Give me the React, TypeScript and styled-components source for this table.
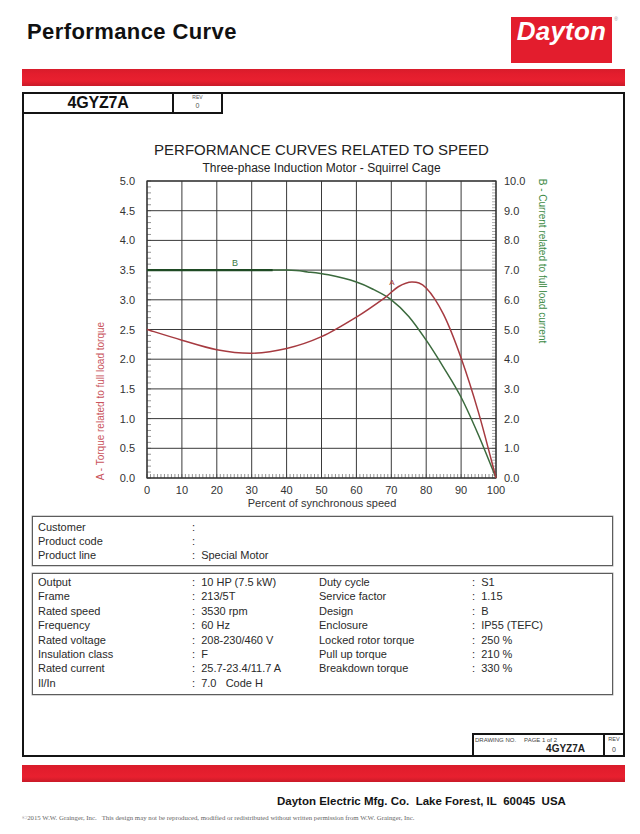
import React from 'react';
import styled, { createGlobalStyle } from 'styled-components';

const GlobalStyle = createGlobalStyle`
	body {
		margin: 0;
		background: #ffffff;
		font-family: "Liberation Sans", Arial, sans-serif;
		color: #111;
	}
`;

const RED = '#e31d2d';

const Page = styled.div`
	width: 640px;
	height: 834px;
	overflow: hidden;
	background: #fff;
`;

const Header = styled.header`
	display: flex;
	justify-content: space-between;
	align-items: flex-start;
	height: 69px;
	padding: 17px 28px 0 27px;
	box-sizing: border-box;
`;

const PageTitle = styled.h1`
	margin: 3px 0 0;
	font-size: 22px;
	font-weight: bold;
	letter-spacing: 0.4px;
	line-height: 24px;
	color: #111;
`;

const Logo = styled.div`
	position: relative;
	width: 101px;
	height: 46px;
	background: ${RED};
	box-sizing: border-box;
	padding-top: 1px;
	text-align: center;
`;

const LogoWord = styled.span`
	color: #fff;
	font-size: 26px;
	font-weight: bold;
	font-style: italic;
	letter-spacing: 0.2px;
	line-height: 27px;
`;

const Registered = styled.span`
	position: absolute;
	top: -1px;
	right: -6px;
	font-size: 5px;
	color: #999;
`;

const RedBar = styled.div<{ $top: number }>`
	margin: ${({ $top }) => $top}px 0 0 22px;
	width: 603px;
	height: 17px;
	background: linear-gradient(180deg, #d81c2b 0%, ${RED} 30%, #e8202f 70%, #c91a28 100%);
`;

const Sheet = styled.section`
	margin: 6px 0 0 22px;
	width: 603px;
	height: 665px;
	border: 2px solid #141414;
	box-sizing: border-box;
	display: flex;
	flex-direction: column;
`;

const TopRow = styled.div`
	display: flex;
	height: 20px;
`;

const ModelCell = styled.div`
	width: 150px;
	box-sizing: border-box;
	border-right: 2px solid #141414;
	border-bottom: 2px solid #141414;
	font-size: 16px;
	font-weight: bold;
	line-height: 18px;
	text-align: center;
	letter-spacing: -0.2px;
`;

const RevCell = styled.div`
	width: 49px;
	box-sizing: border-box;
	border-right: 2px solid #141414;
	border-bottom: 2px solid #141414;
	display: flex;
	flex-direction: column;
	align-items: center;
	color: #555;
`;

const Tiny = styled.span<{ $size: number }>`
	font-size: ${({ $size }) => $size}px;
	line-height: ${({ $size }) => $size + 2}px;
`;

const ChartTitle = styled.h2`
	margin: 27px 0 0;
	font-size: 15px;
	font-weight: normal;
	line-height: 18px;
	text-align: center;
	color: #222;
	padding-right: 4px;
`;

const ChartSubtitle = styled.div`
	margin-top: 2px;
	font-size: 12px;
	line-height: 14px;
	text-align: center;
	color: #222;
	padding-right: 4px;
`;

const ChartSvg = styled.svg`
	display: block;
	width: 599px;
	height: 337px;
	font-family: "Liberation Sans", Arial, sans-serif;
`;

const InfoBox = styled.div<{ $top: number; $pad: string }>`
	margin: ${({ $top }) => $top}px 10px 0 8px;
	border: 1px solid #5c5c5c;
	box-shadow: 0 0 0 0.5px #aaa;
	padding: ${({ $pad }) => $pad};
	padding-left: 5px;
	display: grid;
	grid-template-columns: 154px 127px 153px 1fr;
	font-size: 11px;
	color: #2a2a2a;
`;

const Cell = styled.div<{ $lh: number; $span?: number }>`
	line-height: ${({ $lh }) => $lh}px;
	white-space: pre;
	grid-column: ${({ $span }) => ($span ? `span ${$span}` : 'auto')};
`;

const DrawingRow = styled.div`
	margin-top: auto;
	align-self: flex-end;
	display: flex;
	height: 22px;
`;

const DrawingCell = styled.div`
	width: 131px;
	box-sizing: border-box;
	border-left: 2px solid #141414;
	border-top: 2px solid #141414;
	padding: 1px 0 0 1px;
	display: flex;
	flex-direction: column;
	color: #444;
`;

const DrawingLabels = styled.div`
	display: flex;
	gap: 8px;
	font-size: 6px;
	line-height: 8px;
`;

const DrawingNumber = styled.div`
	align-self: flex-end;
	margin-right: 18px;
	font-size: 10px;
	font-weight: bold;
	line-height: 10px;
	color: #222;
`;

const RevBox = styled.div`
	width: 20px;
	box-sizing: border-box;
	border-left: 2px solid #141414;
	border-top: 2px solid #141414;
	display: flex;
	flex-direction: column;
	align-items: center;
	padding-top: 1px;
	color: #444;
	gap: 1px;
`;

const CompanyLine = styled.div`
	margin-top: 12px;
	padding-left: 277px;
	font-size: 11.5px;
	font-weight: bold;
	line-height: 14px;
	color: #141414;
`;

const Copyright = styled.div`
	margin-top: 6px;
	padding-left: 22px;
	font-family: "Liberation Serif", "Times New Roman", serif;
	font-size: 6.8px;
	line-height: 8px;
	color: #666;
	white-space: nowrap;
`;

// plot geometry in page coordinates (svg viewBox uses page coords)
const X0 = 147;
const X1 = 496;
const Y0 = 478;
const Y1 = 181;
const px = (pct: number) => X0 + (pct / 100) * (X1 - X0);
const py = (v: number) => Y0 - (v / 5) * (Y0 - Y1);

type Pt = [number, number];

const smoothPath = (data: Pt[]) => {
	const pts = data.map(([x, y]) => [px(x), py(y)] as Pt);
	let d = `M${pts[0][0].toFixed(2)},${pts[0][1].toFixed(2)}`;
	for (let i = 0; i < pts.length - 1; i++) {
		const p0 = pts[i - 1] || pts[i];
		const p1 = pts[i];
		const p2 = pts[i + 1];
		const p3 = pts[i + 2] || p2;
		const c1x = p1[0] + (p2[0] - p0[0]) / 6;
		const c1y = p1[1] + (p2[1] - p0[1]) / 6;
		const c2x = p2[0] - (p3[0] - p1[0]) / 6;
		const c2y = p2[1] - (p3[1] - p1[1]) / 6;
		d += ` C${c1x.toFixed(2)},${c1y.toFixed(2)} ${c2x.toFixed(2)},${c2y.toFixed(2)} ${p2[0].toFixed(2)},${p2[1].toFixed(2)}`;
	}
	return d;
};

const torque: Pt[] = [
	[0, 2.5], [10, 2.32], [20, 2.16], [30, 2.1], [40, 2.18], [50, 2.38], [60, 2.71],
	[68, 3.03], [72, 3.22], [76, 3.3], [80, 3.2], [85, 2.75], [90, 2.02], [95, 1.1], [100, 0],
];

const current: Pt[] = [
	[0, 3.5], [20, 3.5], [40, 3.5], [46, 3.47], [52, 3.42], [60, 3.3], [65, 3.17], [70, 3.0],
	[75, 2.72], [80, 2.32], [85, 1.86], [90, 1.36], [95, 0.72], [100, 0],
];

const range = (n: number) => Array.from({ length: n }, (_, i) => i);

const PerformanceChart = () => (
	<ChartSvg viewBox="24 175 599 337">
		{/* minor ticks */}
		{range(51).map(i => (
			<line key={`l${i}`} x1={X0} x2={X0 + 4} y1={py(i * 0.1)} y2={py(i * 0.1)} stroke="#666" strokeWidth={0.7} />
		))}
		{range(101).map(i => (
			<line key={`r${i}`} x1={X1 - 4} x2={X1} y1={py(i * 0.05)} y2={py(i * 0.05)} stroke="#777" strokeWidth={0.6} />
		))}
		{range(101).map(i => (
			<line key={`b${i}`} x1={px(i)} x2={px(i)} y1={Y0} y2={Y0 - 4} stroke="#666" strokeWidth={0.7} />
		))}
		{/* grid */}
		{range(11).map(i => (
			<line key={`v${i}`} x1={px(i * 10)} x2={px(i * 10)} y1={Y1} y2={Y0} stroke="#3a3a3a" strokeWidth={1} />
		))}
		{range(11).map(i => (
			<line key={`h${i}`} x1={X0} x2={X1} y1={py(i * 0.5)} y2={py(i * 0.5)} stroke="#3a3a3a" strokeWidth={1} />
		))}
		<rect x={X0} y={Y1} width={X1 - X0} height={Y0 - Y1} fill="none" stroke="#333" strokeWidth={1.2} />

		{/* axis numbers */}
		{range(11).map(i => (
			<text key={`ln${i}`} x={135} y={py(i * 0.5) + 4} fontSize={11} fill="#333" textAnchor="end">
				{(i * 0.5).toFixed(1)}
			</text>
		))}
		{range(11).map(i => (
			<text key={`rn${i}`} x={504} y={py(i * 0.5) + 4} fontSize={11} fill="#333">
				{i.toFixed(1)}
			</text>
		))}
		{range(11).map(i => (
			<text key={`bn${i}`} x={px(i * 10)} y={494} fontSize={11} fill="#333" textAnchor="middle">
				{i * 10}
			</text>
		))}
		<text x={322} y={507} fontSize={11} fill="#333" textAnchor="middle">
			Percent of synchronous speed
		</text>
		<text x={104} y={401} fontSize={10} fill="#c9535c" textAnchor="middle" transform="rotate(-90 104 401)">
			A - Torque related to full load torque
		</text>
		<text x={539} y={261} fontSize={10} fill="#3c8a45" textAnchor="middle" transform="rotate(90 539 261)">
			B - Current related to full load current
		</text>

		{/* curves */}
		<path d={smoothPath(current)} fill="none" stroke="#3b6a3d" strokeWidth={1.5} />
		<line x1={X0} x2={px(36)} y1={py(3.5)} y2={py(3.5)} stroke="#1f4a24" strokeWidth={2.2} />
		<path d={smoothPath(torque)} fill="none" stroke="#a63a40" strokeWidth={1.5} />
		<text x={235} y={266} fontSize={9} fill="#3c7a42" textAnchor="middle">B</text>
		<text x={392} y={285} fontSize={8} fill="#a63a40" textAnchor="middle">A</text>
	</ChartSvg>
);

const customerRows: [string, string][] = [
	['Customer', ':'],
	['Product code', ':'],
	['Product line', ':  Special Motor'],
];

const specRows: [string, string, string, string][] = [
	['Output', ':  10 HP (7.5 kW)', 'Duty cycle', ':  S1'],
	['Frame', ':  213/5T', 'Service factor', ':  1.15'],
	['Rated speed', ':  3530 rpm', 'Design', ':  B'],
	['Frequency', ':  60 Hz', 'Enclosure', ':  IP55 (TEFC)'],
	['Rated voltage', ':  208-230/460 V', 'Locked rotor torque', ':  250 %'],
	['Insulation class', ':  F', 'Pull up torque', ':  210 %'],
	['Rated current', ':  25.7-23.4/11.7 A', 'Breakdown torque', ':  330 %'],
	['Il/In', ':  7.0   Code H', '', ''],
];

export default function App() {
	return (
		<Page>
			<GlobalStyle />
			<Header>
				<PageTitle>Performance Curve</PageTitle>
				<Logo>
					<LogoWord>Dayton</LogoWord>
					<Registered>®</Registered>
				</Logo>
			</Header>
			<RedBar $top={0} />
			<Sheet>
				<TopRow>
					<ModelCell>4GYZ7A</ModelCell>
					<RevCell>
						<Tiny $size={5}>REV</Tiny>
						<Tiny $size={7}>0</Tiny>
					</RevCell>
				</TopRow>
				<ChartTitle>PERFORMANCE CURVES RELATED TO SPEED</ChartTitle>
				<ChartSubtitle>Three-phase Induction Motor - Squirrel Cage</ChartSubtitle>
				<PerformanceChart />
				<InfoBox $top={4} $pad="3px 0 3px">
					{customerRows.map(([label, value]) => (
						<React.Fragment key={label}>
							<Cell $lh={14}>{label}</Cell>
							<Cell $lh={14} $span={3}>{value}</Cell>
						</React.Fragment>
					))}
				</InfoBox>
				<InfoBox $top={7} $pad="1px 0 4px">
					{specRows.map(row =>
						row.map((text, i) => (
							<Cell key={`${row[0]}-${i}`} $lh={14.4}>
								{text}
							</Cell>
						))
					)}
				</InfoBox>
				<DrawingRow>
					<DrawingCell>
						<DrawingLabels>
							<span>DRAWING NO.</span>
							<span>PAGE 1 of 2</span>
						</DrawingLabels>
						<DrawingNumber>4GYZ7A</DrawingNumber>
					</DrawingCell>
					<RevBox>
						<Tiny $size={5.5}>REV</Tiny>
						<Tiny $size={7}>0</Tiny>
					</RevBox>
				</DrawingRow>
			</Sheet>
			<RedBar $top={8} />
			<CompanyLine>Dayton Electric Mfg. Co.&nbsp; Lake Forest, IL&nbsp; 60045&nbsp; USA</CompanyLine>
			<Copyright>
				©2015 W.W. Grainger, Inc.&nbsp;&nbsp; This design may not be reproduced, modified or redistributed without written permission from W.W. Grainger, Inc.
			</Copyright>
		</Page>
	);
}
